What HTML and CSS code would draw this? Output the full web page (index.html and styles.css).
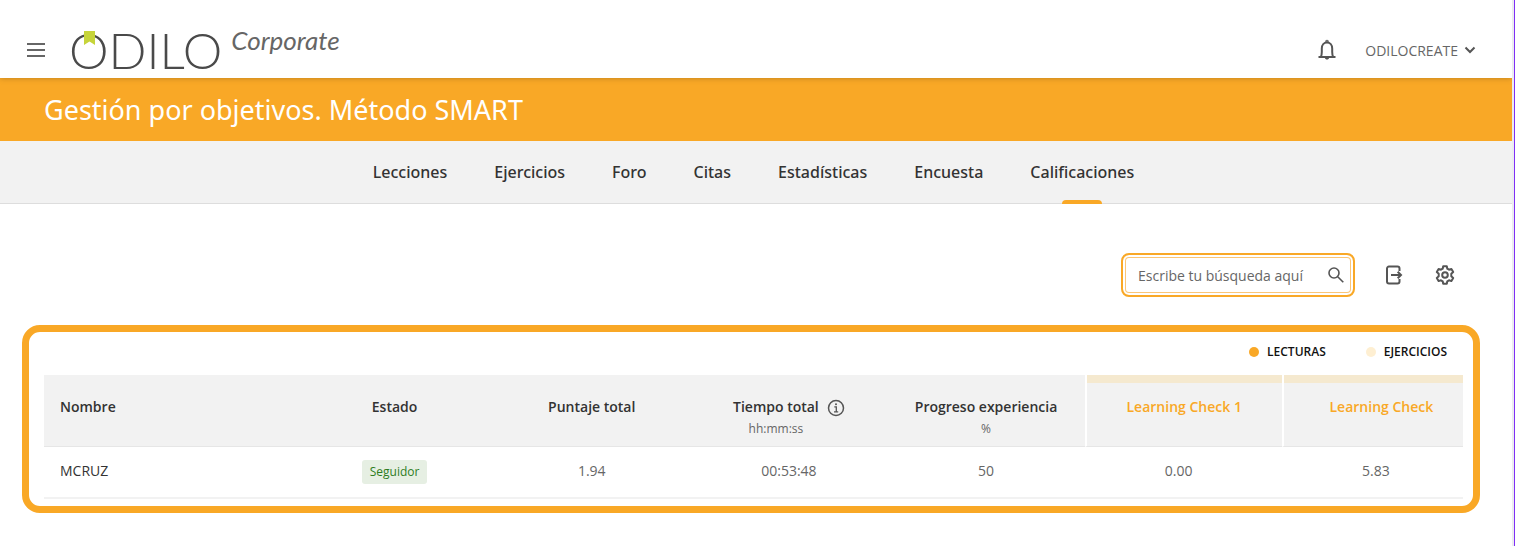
FILE: index.html
```html
<!DOCTYPE html>
<html lang="es">
  <head>
    <meta charset="UTF-8" />
    <meta name="viewport" content="width=device-width, initial-scale=1" />
    <title>Gestión por objetivos. Método SMART</title>
    <link rel="stylesheet" href="styles.css">
  </head>
  <body>
    <header class="topbar">
      <button type="button" class="icon-btn" aria-label="Menú">
        <svg width="18" height="16" viewBox="0 0 18 16" fill="none" stroke="#666" stroke-width="2">
          <path d="M0 2h18M0 8h18M0 14h18" />
        </svg>
      </button>
      <a href="#" class="logo">
        <span class="logo-name">ODILO</span>
        <svg class="logo-mark" width="11" height="14" viewBox="0 0 11 14">
          <path d="M0 0h11v14l-5.500-3.500L0 14z" fill="#c6d43a" />
        </svg>
        <span class="logo-sub">Corporate</span>
      </a>
      <div class="user-area">
        <button type="button" class="icon-btn" aria-label="Notificaciones">
          <svg width="20" height="22" viewBox="0 0 20 22" fill="none" stroke="#555" stroke-width="2">
            <path d="M1.500 18h17M3.800 18c.8-1.500 1-3 1-5V9.500C4.800 6 7 3.400 10 3.400s5.200 2.600 5.200 6.100V13c0 2 .2 3.500 1 5" />
            <path d="M8.400 2.600a1.600 1.400 0 0 1 3.200 0zM8.300 19h3.400a1.700 1.300 0 0 1-3.400 0z" fill="#555" stroke-width=".6" />
          </svg>
        </button>
        <button type="button" class="user-btn">
          ODILOCREATE
          <svg width="12" height="8" viewBox="0 0 12 8" fill="none" stroke="#555" stroke-width="2">
            <path d="M1.500 1.500L6 6l4.500-4.500" />
          </svg>
        </button>
      </div>
    </header>

    <div class="course-title">
      <h1>Gestión por objetivos. Método SMART</h1>
    </div>

    <nav class="tabs">
      <a href="#">Lecciones</a>
      <a href="#">Ejercicios</a>
      <a href="#">Foro</a>
      <a href="#">Citas</a>
      <a href="#">Estadísticas</a>
      <a href="#">Encuesta</a>
      <a href="#" class="active">Calificaciones</a>
    </nav>

    <main>
      <div class="toolbar">
        <form class="search">
          <input type="text" id="busqueda" placeholder="Escribe tu búsqueda aquí" aria-label="Buscar" />
          <button type="submit" class="icon-btn" aria-label="Buscar">
            <svg width="16" height="16" viewBox="0 0 16 16" fill="none" stroke="#555" stroke-width="1.600">
              <circle cx="6" cy="6" r="5" />
              <path d="M9.700 9.700l5.600 5.600" />
            </svg>
          </button>
        </form>
        <button type="button" class="icon-btn" aria-label="Exportar">
          <svg width="18" height="20" viewBox="1 0 18 20" fill="none" stroke="#555" stroke-width="2">
            <path d="M14.500 6V3.500a2 2 0 0 0-2-2H4a2 2 0 0 0-2 2v13a2 2 0 0 0 2 2h8.500a2 2 0 0 0 2-2V14" />
            <path d="M6 10h10M12.700 6.700L16 10l-3.300 3.300" />
          </svg>
        </button>
        <button type="button" class="icon-btn" aria-label="Configuración">
          <svg width="20" height="20" viewBox="0 0 20 20" fill="none" stroke="#555" stroke-width="2" stroke-linejoin="round">
            <path d="M8.200 1.200h3.600l.5 2.500 1.700 1 2.400-.8 1.800 3.100-1.900 1.700v2.600l1.900 1.700-1.800 3.100-2.400-.8-1.700 1-.5 2.500H8.200l-.5-2.500-1.700-1-2.400.8L1.800 13l1.900-1.700V8.700L1.800 7l1.800-3.100 2.400.8 1.700-1z" />
            <circle cx="10" cy="10" r="2.800" />
          </svg>
        </button>
      </div>

      <section class="grades">
        <ul class="legend">
          <li class="lecturas">LECTURAS</li>
          <li class="ejercicios">EJERCICIOS</li>
        </ul>
        <div class="table-wrap">
          <table>
            <thead>
              <tr>
                <th class="name">Nombre</th>
                <th>Estado</th>
                <th>Puntaje total</th>
                <th>
                  <div class="with-info">
                    <div>Tiempo total<small>hh:mm:ss</small></div>
                    <svg width="18" height="18" viewBox="0 0 18 18" fill="none" stroke="#555" stroke-width="1.500">
                      <circle cx="9" cy="9" r="7.500" />
                      <path d="M7.300 7.800h2v4.700M7 12.800h4.200" stroke-width="1.300" />
                      <circle cx="9" cy="5.200" r="1" fill="#555" stroke="none" />
                    </svg>
                  </div>
                </th>
                <th>Progreso experiencia<small>%</small></th>
                <th class="exercise">Learning Check 1</th>
                <th class="exercise">Learning Check</th>
              </tr>
            </thead>
            <tbody>
              <tr>
                <td class="name">MCRUZ</td>
                <td class="status"><span class="badge">Seguidor</span></td>
                <td>1.94</td>
                <td>00:53:48</td>
                <td>50</td>
                <td class="score">0.00</td>
                <td class="score">5.83</td>
              </tr>
            </tbody>
          </table>
        </div>
      </section>
    </main>
  </body>
</html>
```

FILE: styles.css
```css
* {
  box-sizing: border-box;
}
html {
  min-height: 100%;
  background: #fff;
  border-right: 1px solid #7f2ff5;
}
body {
  margin: 0;
  min-height: 100vh;
  border-right: 2px solid #ececf0;
  font-family: "Open Sans", "Noto Sans", sans-serif;
  font-size: 14px;
  color: #333;
}
a {
  color: inherit;
  text-decoration: none;
}
button {
  font-family: inherit;
  background: none;
  border: none;
  padding: 0;
  cursor: pointer;
}
.icon-btn {
  display: flex;
}

/* Header */
.topbar {
  position: relative;
  display: flex;
  align-items: center;
  height: 78px;
  padding: 22px 36px 0 27px;
  box-shadow: 0 0 6px rgba(0, 0, 0, 0.25);
}
.logo {
  position: relative;
  display: flex;
  align-items: flex-start;
  gap: 9px;
  margin-left: 24px;
  font-family: Lato, sans-serif;
  color: #4a4a4a;
}
.logo-name {
  font-weight: 300;
  font-size: 50px;
  line-height: 56px;
}
.logo-mark {
  position: absolute;
  left: 15px;
  top: 9px;
}
.logo-sub {
  font-size: 26px;
  line-height: 36px;
  font-style: italic;
  color: #666;
}
.user-area {
  display: flex;
  align-items: center;
  gap: 28px;
  margin-left: auto;
}
.user-btn {
  display: flex;
  align-items: center;
  gap: 6px;
  font-size: 14px;
  color: #666;
}

.course-title {
  padding: 11px 44px;
  background: #f9a826;
  color: #fff;
}
.course-title h1 {
  margin: 0;
  font-family: "Noto Sans", sans-serif;
  font-size: 27px;
  line-height: 41px;
  font-weight: 400;
}

/* Tabs */
.tabs {
  display: flex;
  justify-content: center;
  gap: 47px;
  padding-right: 5px;
  background: #f2f2f2;
  border-bottom: 1px solid #ddd;
  font-family: "Noto Sans", sans-serif;
  font-size: 16px;
  line-height: 62px;
  font-weight: 500;
}
.tabs a {
  position: relative;
}
.tabs .active::after {
  content: "";
  position: absolute;
  left: 50%;
  bottom: -1px;
  width: 40px;
  height: 4px;
  margin-left: -20px;
  border-radius: 4px 4px 0 0;
  background: #f9a826;
}

main {
  padding: 49px 32px 33px 22px;
}

/* Search and actions */
.toolbar {
  display: flex;
  justify-content: flex-end;
  align-items: center;
  gap: 31px;
  padding-right: 25px;
  margin-bottom: 28px;
}
.search {
  display: flex;
  align-items: center;
  width: 234px;
  height: 44px;
  padding: 0 9px 0 13px;
  border: 2px solid #f9a826;
  border-radius: 8px;
  box-shadow: inset 0 0 0 2px #fff, inset 0 0 0 3px #fbc676;
}
.search input {
  flex: 1;
  min-width: 0;
  padding: 0 2px;
  border: none;
  outline: none;
  background: none;
  font-family: inherit;
  font-size: 14px;
}
.search input::placeholder {
  color: #666;
}

/* Grades */
.grades {
  padding: 12px 10px 7px 15px;
  border: 7px solid #f9a826;
  border-radius: 18px;
}
.legend {
  display: flex;
  justify-content: flex-end;
  gap: 40px;
  margin: 0 16px 15px 0;
  padding: 0;
  list-style: none;
  font-size: 12px;
  line-height: 16px;
  font-weight: 600;
  color: #111;
}
.legend li {
  display: flex;
  align-items: center;
  gap: 8px;
}
.legend li::before {
  content: "";
  width: 10px;
  height: 10px;
  border-radius: 50%;
}
.lecturas::before {
  background: #f9a826;
}
.ejercicios::before {
  background: #feefd2;
}
.table-wrap {
  overflow: hidden;
}
/* the last column runs past the visible area */
table {
  width: calc(100% + 16px);
  table-layout: fixed;
  border-collapse: separate;
  border-spacing: 0;
}
th {
  height: 72px;
  padding: 21px 0 0;
  background: #f2f2f2;
  border-bottom: 1px solid #e6e6e6;
  font-size: 14px;
  line-height: 21px;
  font-weight: 600;
  vertical-align: top;
}
th small {
  display: block;
  font-size: 12px;
  line-height: 23px;
  font-weight: 400;
  color: #666;
}
.with-info {
  display: flex;
  justify-content: center;
  gap: 8px;
}
.with-info svg {
  margin-top: 3px;
}
.exercise {
  border-left: 2px solid #fff;
  background: linear-gradient(#f5e9cf 8px, #f2f2f2 8px) padding-box;
  color: #f9a826;
}
td {
  height: 52px;
  padding: 0 0 4px;
  border-bottom: 2px solid #f2f2f2;
  text-align: center;
  color: #666;
}
.name {
  width: 252px;
  padding-left: 16px;
  text-align: left;
  color: #333;
}
.score {
  padding-right: 9px;
}
.status {
  padding-bottom: 0;
}
.badge {
  display: inline-block;
  padding: 0 8px;
  border-radius: 3px;
  background: #e6efe3;
  font-size: 12px;
  line-height: 24px;
  font-weight: 500;
  color: #2e7d1e;
  vertical-align: bottom;
}
```
